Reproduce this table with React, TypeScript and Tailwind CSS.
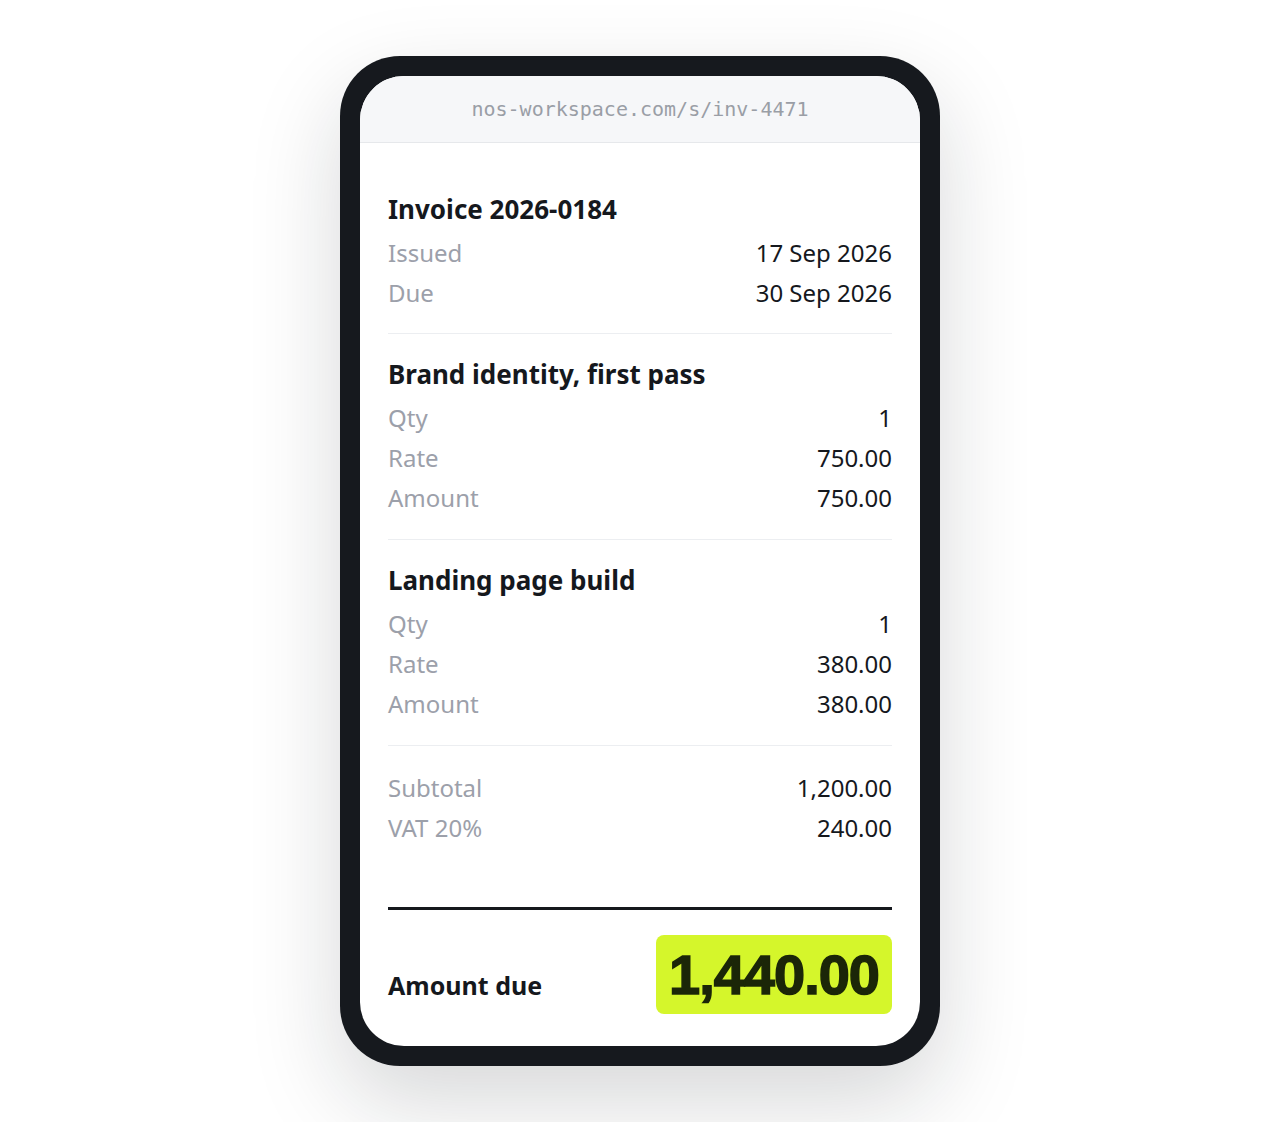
import React from 'react';

const sans = { fontFamily: '"Noto Sans", "Open Sans", sans-serif' };

type Row = { label: string; value: string };

const Line = ({ label, value }: Row) => (
  <div className="flex h-10 items-center justify-between text-[24px]">
    <span className="text-[#9ca0aa]">{label}</span>
    <span className="text-[#15181d]">{value}</span>
  </div>
);

const Section = ({ title, rows, first }: { title: string; rows: Row[]; first?: boolean }) => (
  <div className={`border-b border-[#eceef1] ${first ? 'pt-0 pb-5' : 'pt-[22px] pb-[21px]'}`}>
    <h2 className="mb-1.5 h-9 text-[26px] font-bold leading-9 text-[#15181d]">{title}</h2>
    {rows.map((r) => (
      <Line key={r.label} {...r} />
    ))}
  </div>
);

const App = () => {
  return (
    <div className="flex h-[1122px] w-full items-center justify-center bg-white" style={sans}>
      <div className="h-[1010px] w-[600px] rounded-[60px] bg-[#16191e] p-5 shadow-[0_36px_90px_rgba(20,24,32,0.17)]">
        <div className="flex h-full flex-col overflow-hidden rounded-[44px] bg-white">
          {/* address bar */}
          <div className="flex h-[67px] shrink-0 items-center justify-center border-b border-[#e6e8eb] bg-[#f6f7f9]">
            <span className="text-[20px] text-[#9a9ea6]" style={{ fontFamily: '"DejaVu Sans Mono", monospace' }}>
              nos-workspace.com/s/inv-4471
            </span>
          </div>

          <div className="flex flex-1 flex-col px-7 pt-[48px]">
            <Section
              first
              title="Invoice 2026-0184"
              rows={[
                { label: 'Issued', value: '17 Sep 2026' },
                { label: 'Due', value: '30 Sep 2026' },
              ]}
            />
            <Section
              title="Brand identity, first pass"
              rows={[
                { label: 'Qty', value: '1' },
                { label: 'Rate', value: '750.00' },
                { label: 'Amount', value: '750.00' },
              ]}
            />
            <Section
              title="Landing page build"
              rows={[
                { label: 'Qty', value: '1' },
                { label: 'Rate', value: '380.00' },
                { label: 'Amount', value: '380.00' },
              ]}
            />

            <div className="pt-[22px]">
              <Line label="Subtotal" value="1,200.00" />
              <Line label="VAT 20%" value="240.00" />
            </div>

            <div className="mt-[59px] h-[3px] bg-[#15181d]" />

            <div className="mt-[25px] flex items-end justify-between">
              <span className="mb-[10px] text-[25px] font-bold text-[#15181d]">Amount due</span>
              <div className="flex h-[79px] w-[236px] items-center justify-center rounded-[8px] bg-[#d5f62b]">
                <span
                  className="text-[56px] font-bold leading-none tracking-[-1px] text-[#1b2608]"
                  style={{ fontFamily: '"Liberation Sans", Arial, sans-serif', WebkitTextStroke: '1.5px #1b2608' }}
                >
                  1,440.00
                </span>
              </div>
            </div>
          </div>
        </div>
      </div>
    </div>
  );
};

export default App;
